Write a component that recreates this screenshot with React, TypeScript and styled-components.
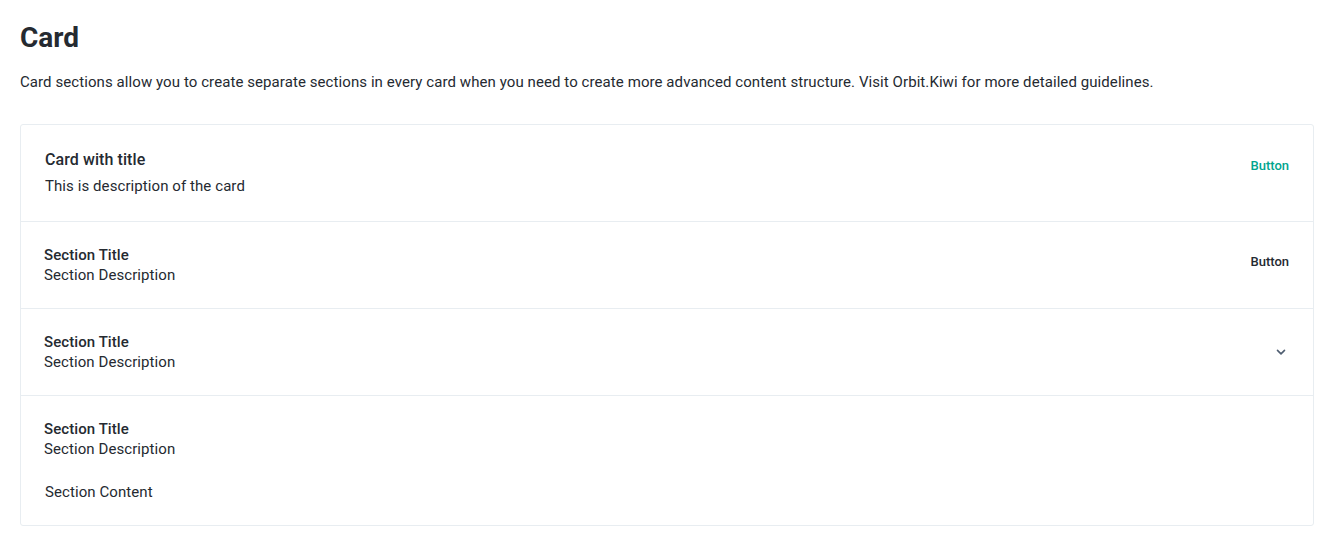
import { FC, ReactNode } from "react"
import styled, { createGlobalStyle } from "styled-components"

const GlobalStyle = createGlobalStyle`
  body {
    margin: 0;
    background: #ffffff;
    font-family: Roboto, "Noto Sans", sans-serif;
    color: #252a31;
    letter-spacing: 0.08px;
  }
`

const Page = styled.div`
  padding: 21px 20px 20px;
`

const PageTitle = styled.h1`
  margin: 0;
  font-size: 28px;
  line-height: 34px;
  font-weight: 700;
  letter-spacing: 0;
  color: #252a31;
`

const Lead = styled.p`
  margin: 17px 0 32px;
  font-size: 15px;
  line-height: 20px;
`

const CardBox = styled.div`
  border: 1px solid #e8edf1;
  border-radius: 3px;
  background: #fff;
`

const Row = styled.div<{ $header?: boolean }>`
  display: flex;
  align-items: flex-start;
  justify-content: space-between;
  padding: ${(p) => (p.$header ? "24px 24px 24px 24px" : "23px 24px 23px 23px")};
  border-bottom: 1px solid #e8edf1;

  &:last-child {
    border-bottom: none;
  }
`

const Texts = styled.div`
  display: flex;
  flex-direction: column;
`

const CardTitle = styled.div`
  font-size: 16px;
  line-height: 22px;
  font-weight: 500;
  margin-bottom: 4px;
`

const CardDesc = styled.div`
  font-size: 15px;
  line-height: 22px;
`

const SectionTitle = styled.div`
  font-size: 15px;
  line-height: 20px;
  font-weight: 500;
`

const SectionDesc = styled.div`
  font-size: 15px;
  line-height: 20px;
`

const SectionContent = styled.div`
  margin-top: 23px;
  padding-left: 1px;
  font-size: 15px;
  line-height: 20px;
`

const TextButton = styled.button<{ $tone: "green" | "dark" }>`
  height: 32px;
  border: none;
  background: none;
  padding: 0;
  font-family: Roboto, sans-serif;
  font-size: 13px;
  font-weight: 500;
  color: ${(p) => (p.$tone === "green" ? "#00a58e" : "#252a31")};
  cursor: pointer;
`

const IconSlot = styled.div`
  align-self: center;
  display: flex;
`

const Chevron: FC = () => (
  <IconSlot>
    <svg width="16" height="16" viewBox="0 0 16 16" fill="none">
      <path d="M4.5 6.4 8 9.9l3.5-3.5" stroke="#4f5e71" strokeWidth="1.6" strokeLinecap="round" strokeLinejoin="round" />
    </svg>
  </IconSlot>
)

const Section: FC<{ action?: ReactNode; children?: ReactNode }> = ({ action, children }) => (
  <Row>
    <Texts>
      <SectionTitle>Section Title</SectionTitle>
      <SectionDesc>Section Description</SectionDesc>
      {children}
    </Texts>
    {action}
  </Row>
)

export default function App() {
  return (
    <Page>
      <GlobalStyle />
      <PageTitle>Card</PageTitle>
      <Lead>
        Card sections allow you to create separate sections in every card when you need to create more advanced
        content structure. Visit Orbit.Kiwi for more detailed guidelines.
      </Lead>
      <CardBox>
        <Row $header>
          <Texts>
            <CardTitle>Card with title</CardTitle>
            <CardDesc>This is description of the card</CardDesc>
          </Texts>
          <TextButton $tone="green">Button</TextButton>
        </Row>
        <Section action={<TextButton $tone="dark">Button</TextButton>} />
        <Section action={<Chevron />} />
        <Section>
          <SectionContent>Section Content</SectionContent>
        </Section>
      </CardBox>
    </Page>
  )
}
